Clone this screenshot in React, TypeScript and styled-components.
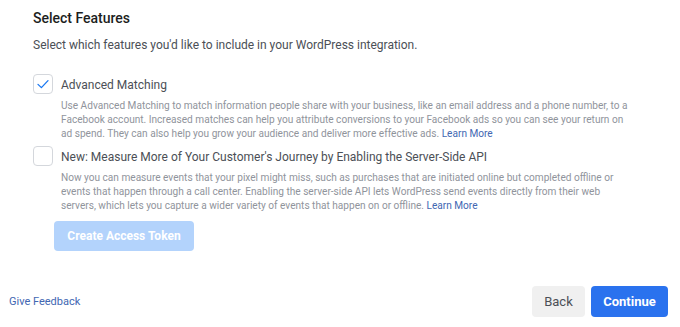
import React from "react";
import styled, { createGlobalStyle } from "styled-components";

const Global = createGlobalStyle`
  html, body { margin: 0; padding: 0; background: #ffffff; }
  body { font-family: Roboto, "Liberation Sans", Arial, sans-serif; -webkit-font-smoothing: antialiased; }
  * { box-sizing: border-box; }
`;

const Page = styled.div`
  width: 680px;
  height: 327px;
  display: flex;
  flex-direction: column;
  justify-content: space-between;
  overflow: hidden;
`;

const Content = styled.section`
  padding: 9px 0 0 33px;
  display: flex;
  flex-direction: column;
`;

const Title = styled.h2`
  margin: 0;
  font-size: 14px;
  line-height: 18px;
  font-weight: 500;
  color: #1c1e21;
`;

const Subtitle = styled.p`
  margin: 10px 0 0;
  font-size: 12px;
  line-height: 16px;
  color: #4b4f56;
`;

const Options = styled.div`
  margin-top: 21px;
  display: flex;
  flex-direction: column;
  gap: 5px;
`;

const Option = styled.label`
  display: grid;
  grid-template-columns: 20px 568px;
  column-gap: 8px;
  row-gap: 3px;
  cursor: pointer;
`;

const Box = styled.span<{ $checked?: boolean }>`
  width: 20px;
  height: 20px;
  border: 1px solid #d4d7dc;
  border-radius: 4px;
  background: #fff;
  display: flex;
  align-items: center;
  justify-content: center;
`;

const OptionTitle = styled.span`
  font-size: 12px;
  line-height: 22px;
  white-space: nowrap;
  color: #4b4f56;
`;

const Desc = styled.p`
  grid-column: 2;
  margin: 0;
  font-size: 10.1px;
  line-height: 14px;
  color: #90949c;
`;

const Link = styled.a`
  color: #4267b2;
  text-decoration: none;
`;

const TokenButton = styled.button`
  margin: 8px 0 0 21px;
  align-self: flex-start;
  width: 140px;
  height: 30px;
  border: none;
  border-radius: 4px;
  background: #b3d3fc;
  color: #ffffff;
  font-family: inherit;
  font-size: 12px;
  font-weight: 700;
`;

const Footer = styled.footer`
  display: flex;
  align-items: center;
  justify-content: space-between;
  padding: 0 12px 10px 9px;
`;

const Feedback = styled.a`
  font-size: 11px;
  color: #4267b2;
  text-decoration: none;
`;

const Actions = styled.div`
  display: flex;
  gap: 6px;
`;

const Btn = styled.button<{ $primary?: boolean }>`
  height: 31px;
  padding: 0;
  width: ${(p) => (p.$primary ? "77px" : "53px")};
  border: none;
  border-radius: 4px;
  font-family: inherit;
  font-size: 13px;
  font-weight: ${(p) => (p.$primary ? 700 : 400)};
  background: ${(p) => (p.$primary ? "#2a72ee" : "#f0f0f0")};
  color: ${(p) => (p.$primary ? "#ffffff" : "#4b4f56")};
`;

const Check = () => (
  <svg width="14" height="14" viewBox="0 0 14 14" fill="none">
    <path d="M2 7.4 L5.4 10.6 L12 3.6" stroke="#1877f2" strokeWidth="1.3" strokeLinecap="round" strokeLinejoin="round" />
  </svg>
);

export default function App() {
  return (
    <>
      <Global />
      <Page>
        <Content>
          <Title>Select Features</Title>
          <Subtitle>Select which features you'd like to include in your WordPress integration.</Subtitle>
          <Options>
            <Option>
              <Box $checked>
                <Check />
              </Box>
              <OptionTitle>Advanced Matching</OptionTitle>
              <Desc>
                Use Advanced Matching to match information people share with your business, like an email address and a phone number, to a Facebook account. Increased matches can help you attribute conversions to your Facebook ads so you can see your return on ad spend. They can also help you grow your audience and deliver more effective ads. <Link href="#">Learn More</Link>
              </Desc>
            </Option>
            <Option>
              <Box />
              <OptionTitle>New: Measure More of Your Customer's Journey by Enabling the Server-Side API</OptionTitle>
              <Desc>
                Now you can measure events that your pixel might miss, such as purchases that are initiated online but completed offline or events that happen through a call center. Enabling the server-side API lets WordPress send events directly from their web servers, which lets you capture a wider variety of events that happen on or offline. <Link href="#">Learn More</Link>
              </Desc>
            </Option>
          </Options>
          <TokenButton disabled>Create Access Token</TokenButton>
        </Content>
        <Footer>
          <Feedback href="#">Give Feedback</Feedback>
          <Actions>
            <Btn>Back</Btn>
            <Btn $primary>Continue</Btn>
          </Actions>
        </Footer>
      </Page>
    </>
  );
}
